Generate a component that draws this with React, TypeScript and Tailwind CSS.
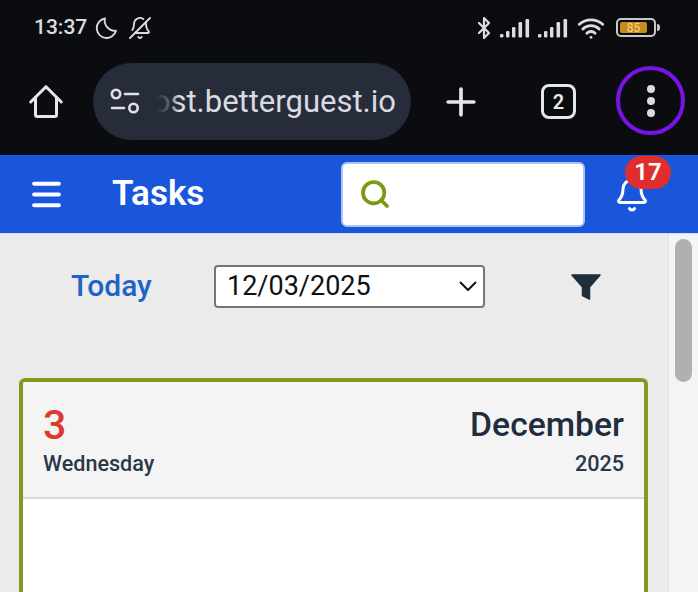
import React from 'react';
import { Plus, Menu, Search, Bell, BellOff, Bluetooth, Wifi } from 'lucide-react';

const SignalBars: React.FC = () => (
  <svg width="30" height="20" viewBox="0 0 30 20" fill="currentColor">
    <rect x="0" y="16" width="3.4" height="3.4" rx="1.2" />
    <rect x="6" y="13" width="3.4" height="6.4" rx="1.2" />
    <rect x="12" y="9" width="3.4" height="10.4" rx="1.2" />
    <rect x="18.5" y="4" width="3.6" height="15.4" rx="1.2" />
    <rect x="25.5" y="1" width="3.6" height="18.4" rx="1.2" />
  </svg>
);

const SliderIcon: React.FC = () => (
  <svg width="30" height="28" viewBox="0 0 30 28" fill="none" stroke="#dfe1e6" strokeWidth="2.6" strokeLinecap="round">
    <circle cx="6" cy="6" r="4.2" />
    <path d="M15 6h13" />
    <path d="M2 20h12" />
    <circle cx="23.5" cy="20" r="4.2" />
  </svg>
);

const HomeIcon: React.FC = () => (
  <svg className="w-[36px] h-[36px] mt-[21px]" viewBox="0 0 24 24" fill="none" stroke="currentColor" strokeWidth="2" strokeLinecap="round" strokeLinejoin="round">
    <path d="M1.8 12 12 1.8 22.2 12" />
    <path d="M5 9v11.5a1.2 1.2 0 0 0 1.2 1.2h11.6a1.2 1.2 0 0 0 1.2-1.2V9" />
  </svg>
);

const MoonIcon: React.FC = () => (
  <svg className="w-[24px] h-[24px] ml-[3px]" viewBox="0 0 24 24" fill="none" stroke="currentColor" strokeWidth="1.8" strokeLinejoin="round">
    <path d="M11 2.5a9.8 9.8 0 1 0 11 12.2A10 10 0 0 1 11 2.5z" />
  </svg>
);

const StatusBar: React.FC = () => (
  <div className="h-[63px] flex items-center justify-between pl-[34px] pr-[38px] pb-[8px] text-[#dcdde0]">
    <div className="flex items-center">
      <span className="text-[21px] font-medium w-[57px]">13:37</span>
      <MoonIcon />
      <BellOff className="w-[24px] h-[24px] ml-[10px] -scale-x-100" strokeWidth={1.8} />
    </div>
    <div className="flex items-center">
      <Bluetooth className="w-[24px] h-[28px]" strokeWidth={2.2} />
      <div className="ml-[4px]"><SignalBars /></div>
      <div className="ml-[8px]"><SignalBars /></div>
      <Wifi className="w-[32px] h-[28px] ml-[7px]" strokeWidth={2.4} />
      <div className="ml-[9px] flex items-center">
        <div className="w-[40px] h-[19px] rounded-[5px] border-2 border-[#c9c9c9] p-[2px]">
          <div className="w-[27px] h-full bg-[#c98a1e] rounded-[2px] flex items-center justify-center text-[12px] leading-none text-[#f2d48a]">85</div>
        </div>
        <div className="w-[3px] h-[7px] bg-[#c9c9c9] rounded-r-sm ml-[1px]" />
      </div>
    </div>
  </div>
);

const BrowserBar: React.FC = () => (
  <div className="h-[92px] flex items-start pl-[28px] text-[#e6e7ea]">
    <HomeIcon />
    <div className="ml-[29px] w-[318px] h-[77px] rounded-full bg-[#272c3a] flex items-center pl-[17px]">
      <SliderIcon />
      <div className="ml-[17px] w-[239px] overflow-hidden relative flex justify-end">
        <div className="shrink-0 text-[31px] leading-[40px] text-[#d9dbe0] whitespace-nowrap">ost.betterguest.io</div>
        <div className="absolute inset-y-0 left-0 w-[22px] bg-gradient-to-r from-[#272c3a] via-[#272c3a]/70 to-transparent" />
      </div>
    </div>
    <Plus className="w-[44px] h-[44px] ml-[28px] mt-[17px]" strokeWidth={2} />
    <div className="ml-[58px] mt-[21px] w-[35px] h-[35px] rounded-[8px] border-[3px] border-[#e6e7ea] flex items-center justify-center text-[20px] font-semibold">2</div>
    <div className="ml-[40px] mt-[3px] w-[69px] h-[69px] rounded-full border-[4px] border-[#7a12e8] flex flex-col items-center justify-center gap-[4px]">
      <span className="w-[8px] h-[8px] rounded-full bg-[#dcdde0]" />
      <span className="w-[8px] h-[8px] rounded-full bg-[#dcdde0]" />
      <span className="w-[8px] h-[8px] rounded-full bg-[#dcdde0]" />
    </div>
  </div>
);

const AppHeader: React.FC = () => (
  <div className="h-[78px] bg-[#1a56db] flex items-center pl-[28px] text-white">
    <Menu className="w-[37px] h-[37px]" strokeWidth={2.6} />
    <span className="ml-[47px] w-[229px] text-[35px] font-semibold">Tasks</span>
    <div className="w-[244px] h-[65px] bg-white rounded-[6px] border-2 border-[#a9c4f0] flex items-center pl-[16px]">
      <Search className="w-[32px] h-[32px] text-[#7a9a12]" strokeWidth={2.8} />
    </div>
    <div className="relative ml-[30px] w-[36px] h-[40px] mt-[3px]">
      <Bell className="w-[36px] h-[38px] -ml-[1px]" strokeWidth={2} />
      <span className="absolute -top-[20px] left-[10px] w-[46px] h-[33px] rounded-full bg-[#e02d2d] flex items-center justify-center text-[24px] font-semibold">17</span>
    </div>
  </div>
);

const DayCard: React.FC = () => (
  <div className="mt-[70px] ml-[19px] w-[629px] flex-1 rounded-t-[6px] border-x-[4px] border-t-[4px] border-[#7f9c1c] bg-white overflow-hidden">
    <div className="h-[117px] bg-[#f4f4f5] border-b-2 border-[#d8d8d8] flex justify-between px-[20px] pt-[21px] text-[#1f2d3d]">
      <div>
        <div className="text-[41px] leading-[44px] font-medium text-[#dc3a2e]">3</div>
        <div className="text-[21.6px] leading-[28px] font-medium text-[#2b3848] mt-[3px]">Wednesday</div>
      </div>
      <div className="text-right">
        <div className="text-[33.7px] leading-[44px] font-medium">December</div>
        <div className="text-[21.6px] leading-[28px] font-medium text-[#2b3848] mt-[3px]">2025</div>
      </div>
    </div>
  </div>
);

export default function App() {
  return (
    <div className="w-[698px] h-[592px] overflow-hidden flex flex-col bg-[#0b0c10] font-['Roboto',sans-serif]">
      <StatusBar />
      <BrowserBar />
      <AppHeader />
      <div className="flex-1 flex min-h-0 border-t border-[#cfe0f7]">
        <div className="w-[668px] bg-[#ebebeb] flex flex-col">
          <div className="flex items-center pt-[30px]">
            <span className="ml-[71px] w-[143px] text-[30px] leading-[44px] font-medium text-[#1f63c8]">Today</span>
            <div className="w-[271px] h-[43px] bg-white rounded-[4px] border-2 border-[#767676] flex items-center justify-between pl-[11px] pr-[6px] text-[27px] text-[#111]">
              12/03/2025
              <svg width="18" height="11" viewBox="0 0 18 11" fill="none" stroke="#111" strokeWidth="2" strokeLinecap="round" strokeLinejoin="round">
                <path d="M1.5 1.5 9 9l7.5-7.5" />
              </svg>
            </div>
            <svg className="ml-[86px] mt-[3px]" width="30" height="27" viewBox="0 0 30 27" fill="#1f2d3d">
              <path d="M1 1h28L18.5 13v12l-7-3.5V13z" strokeLinejoin="round" stroke="#1f2d3d" strokeWidth="1.5" />
            </svg>
          </div>
          <DayCard />
        </div>
        <div className="w-[30px] bg-[#f4f4f4] border-l border-[#e2e2e2] pt-[5px] pl-[6px]">
          <div className="w-[17px] h-[143px] rounded-full bg-[#b0b0b0]" />
        </div>
      </div>
    </div>
  );
}
